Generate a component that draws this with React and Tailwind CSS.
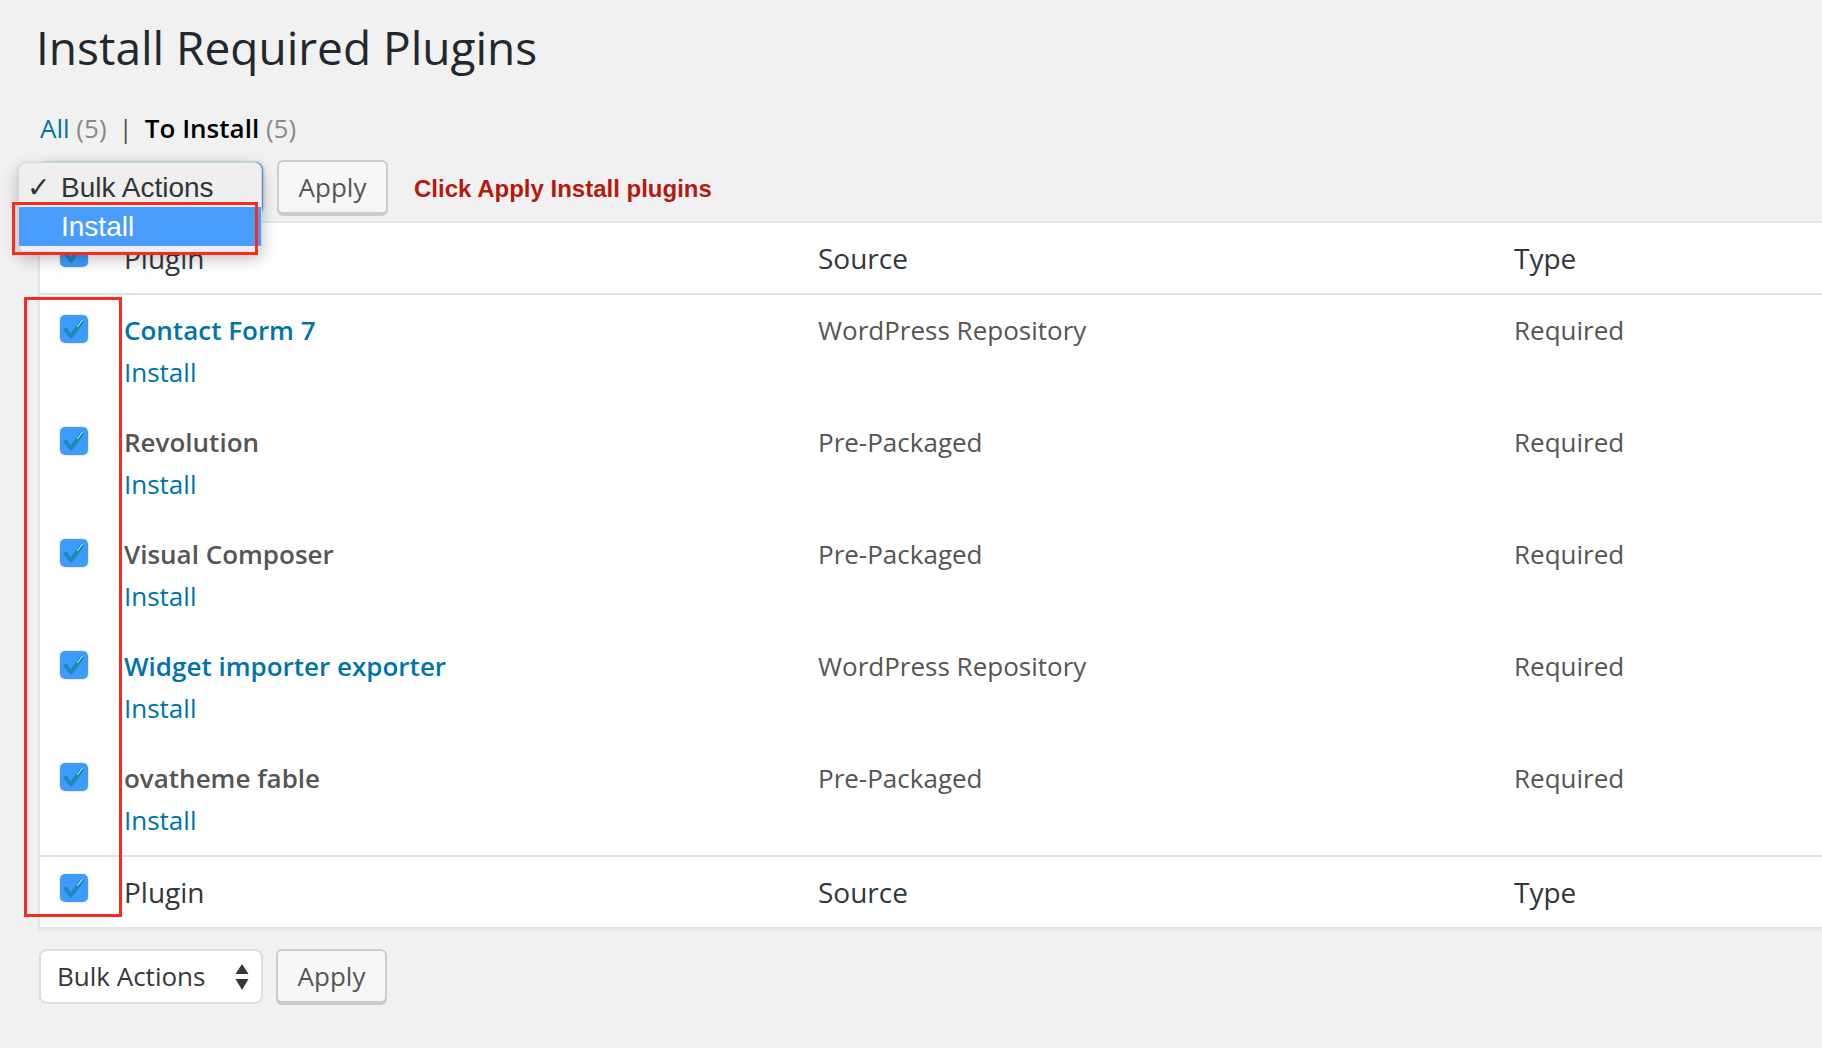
import React from 'react';

const plugins = [
  { name: 'Contact Form 7', link: true, source: 'WordPress Repository' },
  { name: 'Revolution', link: false, source: 'Pre-Packaged' },
  { name: 'Visual Composer', link: false, source: 'Pre-Packaged' },
  { name: 'Widget importer exporter', link: true, source: 'WordPress Repository' },
  { name: 'ovatheme fable', link: false, source: 'Pre-Packaged' },
];

const CheckBox = () => (
  <span className="inline-flex rounded-[6px] ring-1 ring-[#ececec]">
    <svg width="28" height="28" viewBox="0 0 28 28">
      <rect x="0" y="0" width="28" height="28" rx="5" fill="#3d9cfd" />
      <path
        d="M5.5 14.5 L11 21.5 L22 6.5"
        fill="none"
        stroke="#1d88ba"
        strokeWidth="4"
        strokeLinecap="round"
        strokeLinejoin="round"
      />
      <path d="M17.5 11.5 L22.5 5" stroke="#ffffff" strokeWidth="1" strokeLinecap="round" />
    </svg>
  </span>
);

const HeadRow = ({ top }) => (
  <div className={`flex bg-white ${top ? 'border-b-2' : 'border-t-2'} border-[#e1e1e1]`}>
    <div className={`w-[84px] pl-[20px] ${top ? 'pt-[16px]' : 'pt-[17px]'}`}>
      <CheckBox />
    </div>
    <div className="w-[694px] py-[16px] text-[28px] leading-[38px] text-[#32373c]">Plugin</div>
    <div className="w-[696px] py-[16px] text-[28px] leading-[38px] text-[#32373c]">Source</div>
    <div className="flex-1 py-[16px] text-[28px] leading-[38px] text-[#32373c]">Type</div>
  </div>
);

const Row = ({ p }) => (
  <div className="flex">
    <div className="w-[84px] pl-[20px] pt-[20px]">
      <CheckBox />
    </div>
    <div className="w-[694px] py-[16px]">
      <div
        className={`text-[26px] leading-[38px] font-semibold ${p.link ? 'text-[#0073aa]' : 'text-[#555555]'}`}
      >
        {p.name}
      </div>
      <div className="pt-[4px] text-[26px] leading-[38px] text-[#0073aa]">Install</div>
    </div>
    <div className="w-[696px] py-[16px] text-[26px] leading-[38px] text-[#555555]">{p.source}</div>
    <div className="flex-1 py-[16px] text-[26px] leading-[38px] text-[#555555]">Required</div>
  </div>
);

const ApplyButton = () => (
  <button className="h-[54px] w-[111px] rounded-[6px] border-2 border-[#cccccc] bg-[#f7f7f7] text-[26px] text-[#555555] shadow-[0_2px_0_#cccccc]">
    Apply
  </button>
);

export default function App() {
  return (
    <div className="w-[1822px] h-[1048px] overflow-hidden bg-[#f1f1f1] font-['Open_Sans',sans-serif]">
      <div className="pl-[38px]">
        <h1 className="-ml-[2px] pt-[18px] text-[46px] leading-[58px] font-normal text-[#23282d]">
          Install Required Plugins
        </h1>

        <div className="mt-[34px] pl-[2px] text-[26px] leading-[36px] text-[#666666]">
          <span className="text-[#0073aa]">All</span> <span className="text-[#8a8a8a]">(5)</span>
          <span className="px-[12px] text-[#555555]">|</span>
          <span className="font-semibold text-black">To Install</span>{' '}
          <span className="text-[#8a8a8a]">(5)</span>
        </div>

        {/* top bulk actions, select shown open */}
        <div className="relative mt-[14px] flex items-start h-[61px]">
          <div className="mt-[2px] ml-[2px] h-[53px] w-[223px] rounded-[8px] border-2 border-[#5b9dd9] bg-white shadow-[0_0_3px_rgba(30,140,190,0.6)]" />
          <div className="ml-[14px]">
            <ApplyButton />
          </div>
          <div className="ml-[26px] mt-[15px] font-['Liberation_Sans',Arial,sans-serif] text-[24px] leading-[28px] font-bold text-[#b51a10]">
            Click Apply Install plugins
          </div>

          <div className="absolute left-[-20px] top-[2px] z-20 w-[244px] rounded-[8px] border border-[#d4d4d4] bg-[#efefef] py-[6px] shadow-[0_6px_16px_rgba(0,0,0,0.25)] font-['Liberation_Sans','DejaVu_Sans',sans-serif]">
            <div className="flex h-[38px] items-center text-[28px] text-[#333333]">
              <span className="w-[42px] pl-[8px] text-[28px] font-bold leading-none">✓</span>
              <span>Bulk Actions</span>
            </div>
            <div className="flex h-[39px] items-center bg-[#4a9dfc] pl-[42px] text-[28px] text-white">
              Install
            </div>
          </div>
          <div className="absolute left-[-26px] top-[42px] z-30 h-[53px] w-[246px] border-[3px] border-[#fa2b1e]" />
        </div>

        <div className="relative border-2 border-r-0 border-[#e5e5e5] bg-white shadow-[0_2px_2px_rgba(0,0,0,0.04)]">
          <HeadRow top />
          {plugins.map((p) => (
            <Row key={p.name} p={p} />
          ))}
          <HeadRow />
          <div className="absolute left-[-16px] top-[74px] z-10 h-[620px] w-[98px] border-[3px] border-[#fa2b1e]" />
        </div>

        <div className="mt-[20px] flex items-start">
          <div className="ml-[1px] flex h-[55px] w-[224px] items-center justify-between rounded-[8px] border-2 border-[#dddddd] bg-white pl-[16px] pr-[12px] text-[26px] text-[#32373c]">
            <span>Bulk Actions</span>
            <svg width="14" height="26" viewBox="0 0 14 26">
              <path d="M7 0 L13.5 10 L0.5 10 Z" fill="#32373c" />
              <path d="M7 26 L13.5 15 L0.5 15 Z" fill="#32373c" />
            </svg>
          </div>
          <div className="ml-[13px]">
            <ApplyButton />
          </div>
        </div>
      </div>
    </div>
  );
}
